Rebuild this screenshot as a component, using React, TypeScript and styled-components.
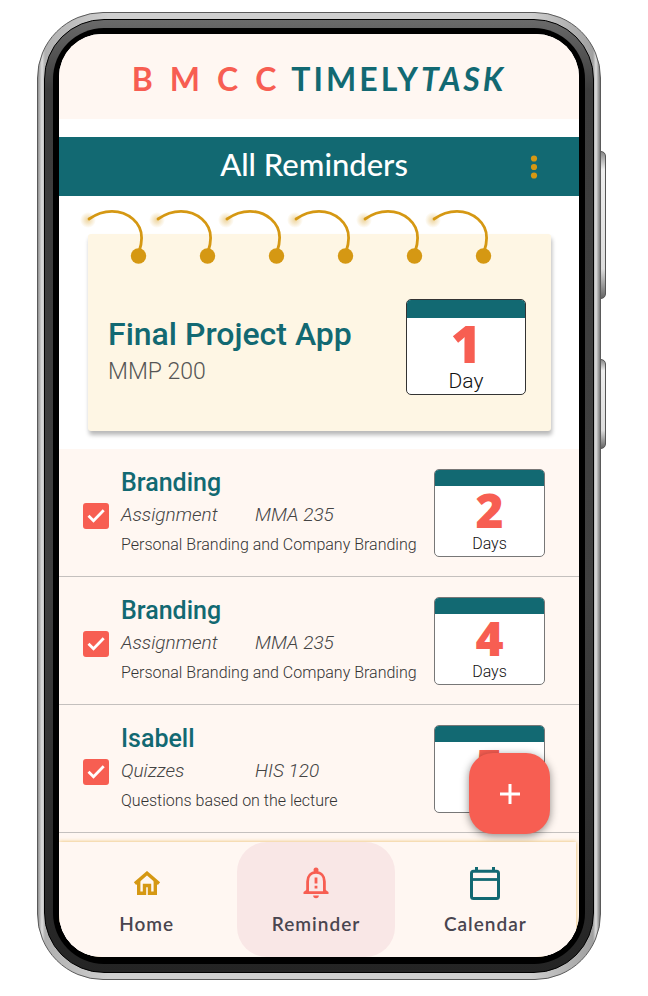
import React from "react";
import styled, { createGlobalStyle } from "styled-components";

const teal = "#126972";
const coral = "#f75e52";
const gold = "#d59813";
const cream = "#fff7f2";

const GlobalStyle = createGlobalStyle`
  * { box-sizing: border-box; }
  body { margin: 0; background: #fff; font-family: Roboto, "Noto Sans", sans-serif; }
  h1, h2, h3, p, ul { margin: 0; padding: 0; }
  ul { list-style: none; }
  button { font: inherit; border: 0; padding: 0; background: none; cursor: pointer; }
`;

const Page = styled.main`
  padding: 12px 47px 16px 37px;
`;

const Frame = styled.div`
  position: relative;
  padding: 6px;
  border-radius: 66px;
  border: 1px solid #5a5a5a;
  background: linear-gradient(90deg, #8f8f8f 0, #dedede 4px, #b0b0b0 7px, #cfcfcf 70px, #cfcfcf calc(100% - 70px), #a0a0a0 calc(100% - 7px), #dedede calc(100% - 4px), #777 100%);
`;

const SideKey = styled.span<{ $top: number; $height: number }>`
  position: absolute;
  z-index: -1;
  right: -6px;
  top: ${(p) => p.$top}px;
  width: 10px;
  height: ${(p) => p.$height}px;
  border: 1px solid #555;
  border-radius: 3px 5px 5px 3px;
  background: linear-gradient(#888, #eee 12%, #ddd 80%, #666);
`;

const Bezel = styled.div`
  padding: 8px;
  border: 1px solid #000;
  border-radius: 60px;
  background: linear-gradient(#6a6a6a, #3c3c3c 70px, #404040 60%, #242424);
`;

const Rim = styled.div`
  padding: 6px;
  padding-bottom: 7px;
  border-radius: 51px;
  background: #000;
`;

const Screen = styled.div`
  overflow: hidden;
  border-radius: 43px;
  background: #fff;
`;

const Brand = styled.header`
  display: flex;
  align-items: center;
  justify-content: center;
  gap: 15px;
  height: 85px;
  padding-top: 4px;
  background: ${cream};
  font: 700 32px/40px Lato, sans-serif;
`;

const College = styled.span`
  display: flex;
  gap: 17px;
  color: ${coral};
`;

const Product = styled.h1`
  color: ${teal};
  font: inherit;
  letter-spacing: 3px;
`;

const TitleBar = styled.div`
  display: grid;
  grid-template-columns: 24px 1fr 24px;
  align-items: center;
  margin-top: 18px;
  min-height: 59px;
  padding: 0 33px 0 23px;
  background: ${teal};
`;

const Title = styled.h2`
  grid-column: 2;
  padding-bottom: 6px;
  color: #fff;
  text-align: center;
  font: 500 31px/40px Lato, sans-serif;
`;

const MenuButton = styled.button`
  display: grid;
  place-items: center;
  height: 36px;
`;

const Featured = styled.section`
  position: relative;
  padding: 38px 28px 18px 29px;
`;

const Rings = styled.div`
  position: absolute;
  top: 8px;
  left: 20px;
  display: flex;
  gap: 1px;
`;

const NoteCard = styled.article`
  display: flex;
  justify-content: space-between;
  padding: 65px 25px 36px 20px;
  border-radius: 3px;
  background: #fef6e4;
  box-shadow: 1px 4px 4px rgba(0, 0, 0, 0.28);
`;

const NoteText = styled.div`
  padding-top: 15px;
`;

const NoteTitle = styled.h3`
  color: ${teal};
  font-size: 32px;
  font-weight: 500;
  line-height: 40px;
`;

const NoteCourse = styled.p`
  color: #555;
  font-size: 23px;
  font-weight: 300;
  line-height: 36px;
`;

const DayCard = styled.div<{ $large?: boolean }>`
  display: flex;
  flex-direction: column;
  align-items: center;
  flex: none;
  width: ${(p) => (p.$large ? 120 : 111)}px;
  height: ${(p) => (p.$large ? 96 : 88)}px;
  overflow: hidden;
  border: 1px solid ${(p) => (p.$large ? "#333" : "#777")};
  border-radius: 5px;
  background: #fff;
  color: #111;
  font-size: ${(p) => (p.$large ? 21 : 16)}px;
  font-weight: 300;
  line-height: ${(p) => (p.$large ? 26 : 20)}px;

  &::before {
    content: "";
    flex: none;
    width: 100%;
    height: ${(p) => (p.$large ? 18 : 16)}px;
    background: ${teal};
  }

  strong {
    color: ${coral};
    font: 800 ${(p) => (p.$large ? 52 : 48)}px / ${(p) => (p.$large ? 50 : 48)}px "Open Sans", sans-serif;
  }
`;

const ListArea = styled.section`
  position: relative;
  padding-bottom: 9px;
  background: ${cream};
`;

const Row = styled.li`
  display: grid;
  grid-template-columns: 26px 1fr auto;
  align-items: center;
  column-gap: 12px;
  min-height: 128px;
  padding: 0 34px 0 24px;
  border-bottom: 1px solid #c4c0be;
`;

const CheckLabel = styled.label`
  display: grid;
  margin-top: 6px;
  cursor: pointer;

  input, svg { grid-area: 1 / 1; }
  svg { pointer-events: none; visibility: hidden; }
  input:checked + svg { visibility: visible; }
`;

const CheckInput = styled.input`
  appearance: none;
  width: 26px;
  height: 26px;
  margin: 0;
  border: 2px solid ${coral};
  border-radius: 3px;

  &:checked { background: ${coral}; }
`;

const RowTitle = styled.h3`
  color: ${teal};
  font-size: 25px;
  font-weight: 500;
  line-height: 32px;
`;

const RowMeta = styled.p`
  display: grid;
  grid-template-columns: 134px 1fr;
  color: #444;
  font-size: 19px;
  font-style: italic;
  font-weight: 300;
  line-height: 32px;
`;

const RowNote = styled.p`
  color: #333;
  font-size: 16px;
  font-weight: 300;
  line-height: 28px;
  white-space: nowrap;
`;

const RowText = styled.div`
  min-width: 0;
`;

const AddButton = styled.button`
  position: absolute;
  right: 29px;
  bottom: 8px;
  display: grid;
  place-items: center;
  width: 81px;
  height: 81px;
  border-radius: 24px;
  background: ${coral};
  box-shadow: 0 2px 8px rgba(0, 0, 0, 0.45);
`;

const NavTray = styled.div`
  padding-right: 3px;
  background: ${cream};
`;

const Nav = styled.nav`
  position: relative;
  display: grid;
  grid-template-columns: repeat(3, 1fr);
  padding: 0 6px 0 3px;
  background: ${cream};
  box-shadow: 0 0 4px rgba(223, 160, 30, 0.7);
`;

const NavItem = styled.a<{ $active?: boolean }>`
  display: flex;
  flex-direction: column;
  align-items: center;
  gap: 9px;
  margin: 0 6px;
  padding: 23px 0 19px;
  border-radius: 30px;
  background: ${(p) => (p.$active ? "#f9e7e6" : "transparent")};
  color: #49454f;
  font: 600 19px/28px Lato, sans-serif;
  letter-spacing: 1px;
  text-decoration: none;
`;

const NavIcon = styled.span<{ $color: string }>`
  display: grid;
  place-items: center;
  height: 36px;
  color: ${(p) => p.$color};
`;

const Ring = ({ id }: { id: string }) => (
  <svg width="68" height="60" viewBox="0 0 68 60" aria-hidden="true">
    <defs>
      <radialGradient id={id}>
        <stop offset="0" stopColor={gold} stopOpacity="0.4" />
        <stop offset="1" stopColor={gold} stopOpacity="0" />
      </radialGradient>
    </defs>
    <circle cx="9" cy="16" r="8" fill={`url(#${id})`} />
    <path d="M10 15C17 10 24 7.3 33 7.3C49 7.3 63 19 62.6 34C62.5 38 62 42 60.5 46" fill="none" stroke={gold} strokeWidth="2.8" strokeLinecap="round" />
    <circle cx="59.5" cy="52" r="7.7" fill={gold} />
  </svg>
);

const HomeIcon = () => (
  <svg width="28" height="24" viewBox="0 0 28 24" fill="none" stroke="currentColor" strokeWidth="3.4" aria-hidden="true">
    <path d="M2 12.6L14 2.2L26 12.6" />
    <path d="M5.7 10V22.3H11.5V14.5H16.5V22.3H22.3V10" />
  </svg>
);

const BellIcon = () => (
  <svg width="26" height="32" viewBox="0 0 26 32" fill="none" stroke="currentColor" strokeWidth="2.8" aria-hidden="true">
    <path d="M4.6 25V14.5C4.6 9 8 5.4 13 5.4S21.4 9 21.4 14.5V25" />
    <path d="M4 22.6L0.5 25V27H25.5V25L22 22.6V24.2H4Z" fill="currentColor" stroke="none" />
    <circle cx="13" cy="2.9" r="2.5" fill="currentColor" stroke="none" />
    <path d="M13 10.5V16.5M13 18.7V21.6" />
    <path d="M10.2 28.6H15.8A2.8 2.6 0 0 1 10.2 28.6Z" fill="currentColor" stroke="none" />
  </svg>
);

const CalendarIcon = () => (
  <svg width="30" height="33" viewBox="0 0 30 33" fill="none" stroke="currentColor" aria-hidden="true">
    <rect x="1.5" y="4.3" width="27" height="27.2" rx="2" strokeWidth="3" />
    <path d="M1 12.5H29" strokeWidth="2.8" />
    <path d="M6.5 0V4M23.5 0V4" strokeWidth="3" />
  </svg>
);

type Reminder = { title: string; kind: string; course: string; note: string; days: number };

const reminders: Reminder[] = [
  { title: "Branding", kind: "Assignment", course: "MMA 235", note: "Personal Branding and Company Branding", days: 2 },
  { title: "Branding", kind: "Assignment", course: "MMA 235", note: "Personal Branding and Company Branding", days: 4 },
  { title: "Isabell", kind: "Quizzes", course: "HIS 120", note: "Questions based on the lecture", days: 5 },
];

const ReminderRow = ({ item, index }: { item: Reminder; index: number }) => (
  <Row>
    <CheckLabel htmlFor={`reminder-${index}`}>
      <CheckInput id={`reminder-${index}`} type="checkbox" defaultChecked aria-labelledby={`reminder-title-${index}`} />
      <svg width="26" height="26" viewBox="0 0 26 26" fill="none" aria-hidden="true">
        <path d="M5.5 12.7L10.5 17.7L20.7 7.3" stroke="#fff" strokeWidth="2.8" />
      </svg>
    </CheckLabel>
    <RowText>
      <RowTitle id={`reminder-title-${index}`}>{item.title}</RowTitle>
      <RowMeta>
        <span>{item.kind}</span>
        <span>{item.course}</span>
      </RowMeta>
      <RowNote>{item.note}</RowNote>
    </RowText>
    <DayCard>
      <strong>{item.days}</strong>
      <span>Days</span>
    </DayCard>
  </Row>
);

export default function App() {
  return (
    <Page>
      <GlobalStyle />
      <Frame>
        <SideKey $top={138} $height={148} />
        <SideKey $top={346} $height={90} />
        <Bezel>
          <Rim>
            <Screen>
              <Brand>
                <College>
                  <span>B</span>
                  <span>M</span>
                  <span>C</span>
                  <span>C</span>
                </College>
                <Product>
                  TIMELY<em>TASK</em>
                </Product>
              </Brand>
              <TitleBar>
                <Title>All Reminders</Title>
                <MenuButton type="button" aria-label="More options">
                  <svg width="8" height="24" viewBox="0 0 8 24" fill={gold} aria-hidden="true">
                    <circle cx="4" cy="3.5" r="3.1" />
                    <circle cx="4" cy="12" r="3.1" />
                    <circle cx="4" cy="20.5" r="3.1" />
                  </svg>
                </MenuButton>
              </TitleBar>
              <Featured>
                <NoteCard>
                  <NoteText>
                    <NoteTitle>Final Project App</NoteTitle>
                    <NoteCourse>MMP 200</NoteCourse>
                  </NoteText>
                  <DayCard $large>
                    <strong>1</strong>
                    <span>Day</span>
                  </DayCard>
                </NoteCard>
                <Rings>
                  {["a", "b", "c", "d", "e", "f"].map((key) => (
                    <Ring key={key} id={`ring-${key}`} />
                  ))}
                </Rings>
              </Featured>
              <ListArea>
                <ul>
                  {reminders.map((item, index) => (
                    <ReminderRow key={index} item={item} index={index} />
                  ))}
                </ul>
                <AddButton type="button" aria-label="Add reminder">
                  <svg width="22" height="22" viewBox="0 0 22 22" stroke="#fff" strokeWidth="3" aria-hidden="true">
                    <path d="M11 1V21M1 11H21" />
                  </svg>
                </AddButton>
              </ListArea>
              <NavTray>
                <Nav>
                  <NavItem href="#home">
                    <NavIcon $color={gold}>
                      <HomeIcon />
                    </NavIcon>
                    Home
                  </NavItem>
                  <NavItem href="#reminder" $active aria-current="page">
                    <NavIcon $color={coral}>
                      <BellIcon />
                    </NavIcon>
                    Reminder
                  </NavItem>
                  <NavItem href="#calendar">
                    <NavIcon $color={teal}>
                      <CalendarIcon />
                    </NavIcon>
                    Calendar
                  </NavItem>
                </Nav>
              </NavTray>
            </Screen>
          </Rim>
        </Bezel>
      </Frame>
    </Page>
  );
}
